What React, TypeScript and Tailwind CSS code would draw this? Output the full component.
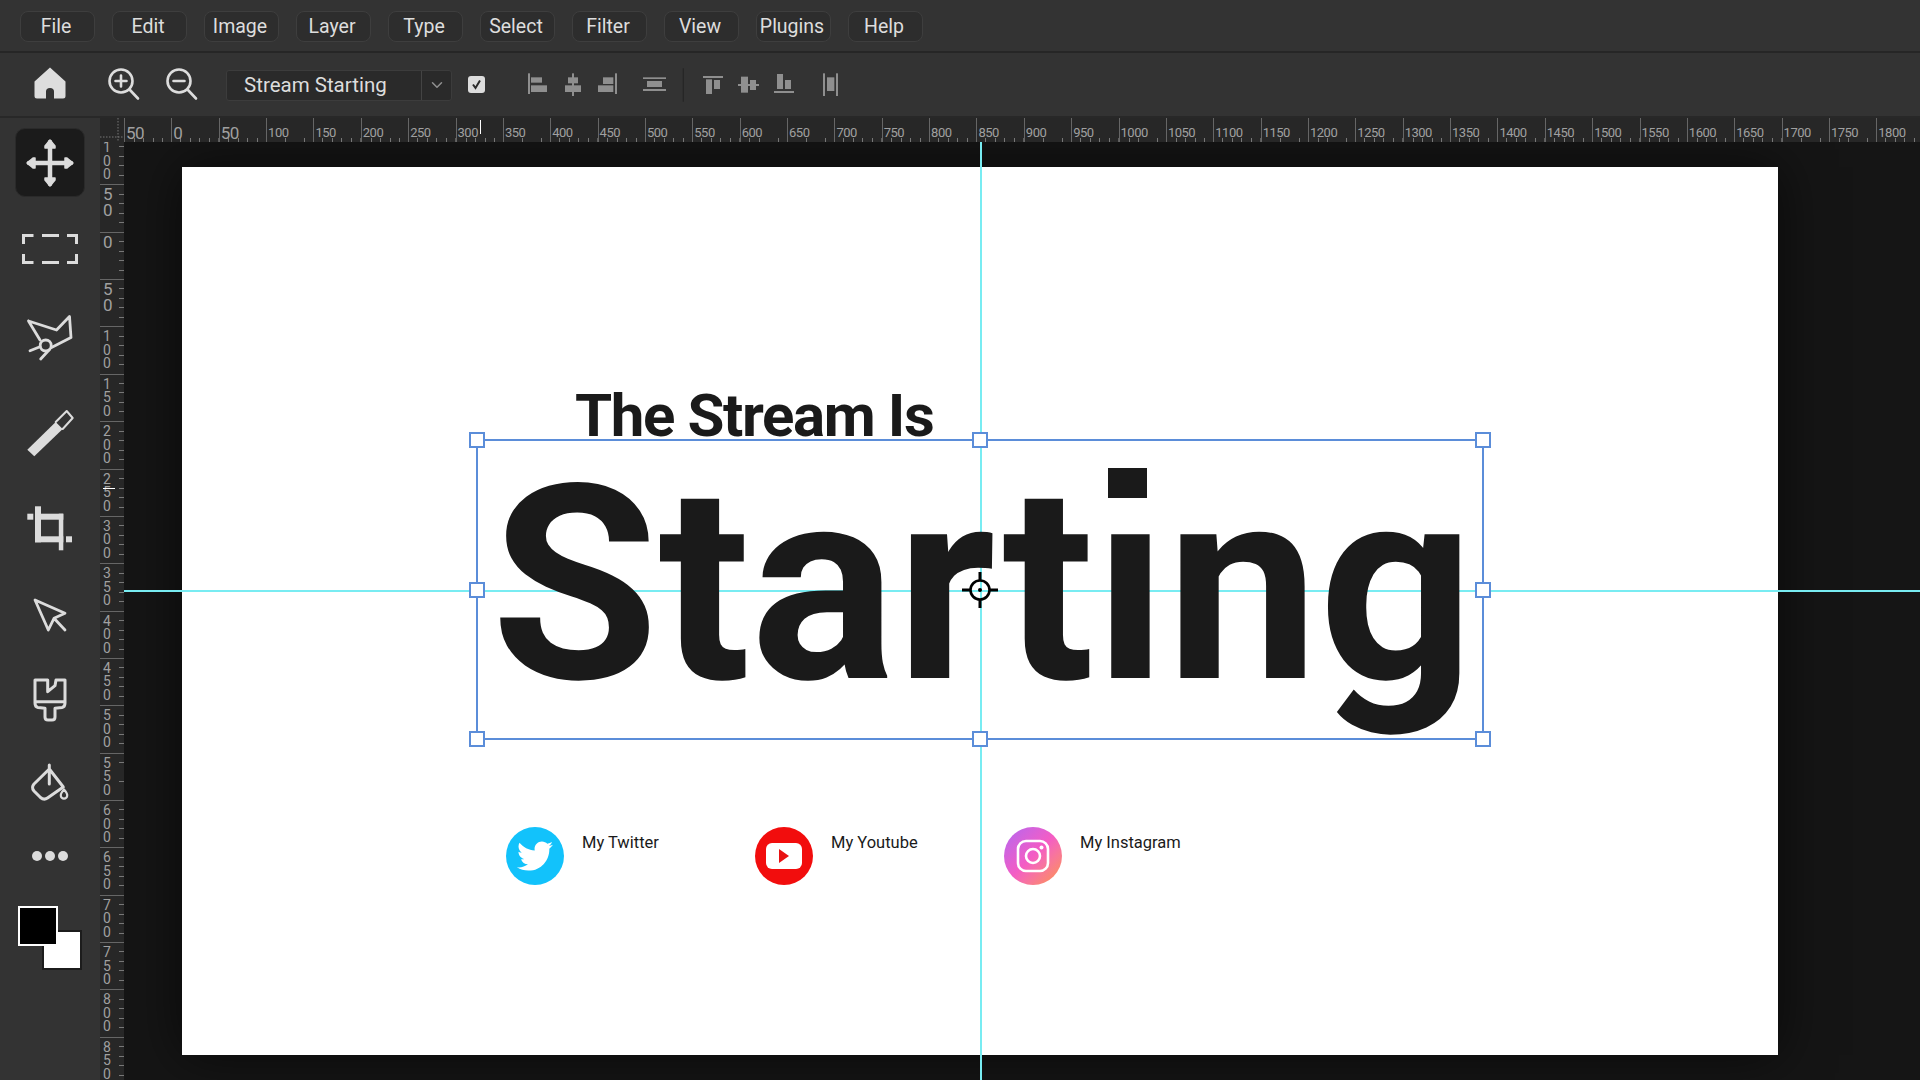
import { ChevronDown } from 'lucide-react';
import { FaTwitter } from 'react-icons/fa';

const menus = ['File', 'Edit', 'Image', 'Layer', 'Type', 'Select', 'Filter', 'View', 'Plugins', 'Help'];

const topLabels = ['50', '0', '50'].concat(
  Array.from({ length: 35 }, (_, i) => String((i + 2) * 50))
);
const sideLabels = ['100', '50', '0', '50'].concat(
  Array.from({ length: 17 }, (_, i) => String((i + 2) * 50))
);

// rects for the align row, measured in a 1080x150 box
const alignBars = [
  [84, 40, 6, 62], [93, 52, 33, 16], [93, 76, 48, 20],
  [216, 40, 6, 68], [204, 52, 30, 18], [195, 76, 48, 20],
  [345, 40, 6, 62], [309, 52, 31, 20], [294, 76, 46, 20],
  [429, 52, 69, 5], [441, 63, 45, 18], [429, 87, 69, 6],
  [609, 48, 60, 6], [618, 58, 18, 44], [642, 60, 18, 27],
  [714, 72, 63, 6], [723, 50, 21, 48], [750, 60, 18, 30],
  [822, 93, 60, 6], [831, 42, 18, 45], [855, 60, 18, 27],
  [969, 40, 6, 68], [1008, 40, 6, 68], [981, 52, 22, 41],
];

function ToolSvg({ children }: { children: React.ReactNode }) {
  return (
    <svg width="68" height="68" viewBox="0 0 68 68" fill="none" stroke="#dcdcdc" strokeWidth="2.8" strokeLinejoin="round" strokeLinecap="round">
      {children}
    </svg>
  );
}

function Tool({ className, children }: { className: string; children: React.ReactNode }) {
  return <div className={`w-[70px] h-[69px] flex items-center justify-center rounded-[10px] ${className}`}>{children}</div>;
}

function Handle({ className }: { className: string }) {
  return <div className={`absolute w-4 h-4 -translate-x-1/2 -translate-y-1/2 bg-white border-2 border-[#5b8dd9] ${className}`} />;
}

function Social({ label, className, children }: { label: string; className: string; children: React.ReactNode }) {
  return (
    <div className="flex w-[249px] items-start gap-[19px]">
      <div className={`w-[58px] h-[58px] rounded-full flex items-center justify-center ${className}`}>{children}</div>
      <span className="text-[16.5px] leading-[20px] mt-[6px] -ml-px text-[#1a1a1a]">{label}</span>
    </div>
  );
}

export default function App() {
  return (
    <div className="w-[1920px] h-[1080px] overflow-hidden flex flex-col bg-[#333333] font-['Roboto',sans-serif] text-[#dddddd]">
      {/* Menu bar */}
      <div className="h-[53px] shrink-0 flex items-start gap-[17px] pl-5 pt-[11px] border-b-2 border-[#262626]">
        {menus.map((m) => (
          <div key={m} className="w-[75px] h-[31px] flex items-center justify-center rounded-lg bg-[#2d2d2d] border border-[#3e3e3e] text-[19.5px] pt-px pr-[3px]">
            {m}
          </div>
        ))}
      </div>

      {/* Options bar */}
      <div className="h-[65px] shrink-0 flex items-center border-b-2 border-[#282828]">
        <svg className="ml-[34px] -mt-[3px]" width="32" height="32" viewBox="0 0 32 32" fill="#dddddd">
          <path d="M16 0.5 L31.5 14.5 V29 Q31.5 31.5 29 31.5 H20 V24.5 Q20 21 16 21 Q12 21 12 24.5 V31.5 H3 Q0.5 31.5 0.5 29 V14.5 Z" />
        </svg>
        <svg className="ml-[41px]" width="34" height="34" viewBox="0 0 34 34" fill="none" stroke="#dddddd" strokeWidth="2.6" strokeLinecap="round">
          <circle cx="14" cy="13" r="11.5" />
          <path d="M22.5 21.5 L31 30.5 M8.5 13 H19.5 M14 7.5 V18.5" />
        </svg>
        <svg className="ml-[24px]" width="34" height="34" viewBox="0 0 34 34" fill="none" stroke="#dddddd" strokeWidth="2.6" strokeLinecap="round">
          <circle cx="14" cy="13" r="11.5" />
          <path d="M22.5 21.5 L31 30.5 M8.5 13 H19.5" />
        </svg>
        <div className="ml-[27px] mt-[1px] w-[226px] h-[31px] flex rounded-[3px] bg-[#2a2a2a] border border-[#3c3c3c]">
          <div className="w-[195px] pl-[17px] text-[20.5px] leading-[29px] border-r border-[#444444]">Stream Starting</div>
          <div className="flex-1 flex items-center justify-center">
            <ChevronDown size={18} color="#909090" />
          </div>
        </div>
        <div className="ml-4 w-[17px] h-[17px] rounded-[3px] bg-[#dddddd] flex items-center justify-center">
          <svg width="11" height="11" viewBox="0 0 11 11" fill="none" stroke="#2a2a2a" strokeWidth="2">
            <path d="M2 5.5 L4.5 9 L9 1.5" />
          </svg>
        </div>
        <svg className="ml-[15px]" width="360" height="50" viewBox="0 0 1080 150" fill="#8f8f8f">
          {alignBars.map(([x, y, w, h], i) => (
            <rect key={i} x={x} y={y} width={w} height={h} />
          ))}
          <rect x="548" y="25" width="4" height="100" fill="#262626" />
        </svg>
      </div>

      <div className="flex-1 flex min-h-0">
        {/* Tools */}
        <div className="w-[100px] shrink-0 flex flex-col items-center pt-[10px]">
          <Tool className="bg-[#1b1b1b] border border-[#2a2a2a]">
            <ToolSvg>
              <path d="M34 13 V55 M13 34 H55" strokeWidth="4.5" />
              <path d="M34 11 L39 17 L39 19 L29 19 L29 17 Z M34 57 L39 51 L39 49 L29 49 L29 51 Z M11 34 L17 29 L19 29 L19 39 L17 39 Z M57 34 L51 29 L49 29 L49 39 L51 39 Z" fill="#dcdcdc" strokeWidth="1.5" />
            </ToolSvg>
          </Tool>
          <Tool className="mt-[17px]">
            <ToolSvg>
              <path strokeLinecap="butt" strokeLinejoin="miter" strokeWidth="3" d="M7.5 29 V20.5 H17.5 M26 20.5 H43 M51 20.5 H60.5 V29 M60.5 39 V47.5 H51 M43 47.5 H26 M17.5 47.5 H7.5 V39" />
            </ToolSvg>
          </Tool>
          <Tool className="mt-[19px]">
            <ToolSvg>
              <path d="M12.5 18 L40.5 27 L53.5 13.5 L55 34.5 L35.5 44.5 M12.5 18 L24 37" />
              <circle cx="29.7" cy="42.5" r="5.5" />
              <path d="M14 47.7 L24 43.7 M24.7 56 L33 47" />
            </ToolSvg>
          </Tool>
          <Tool className="mt-[27px]">
            <ToolSvg>
              <path d="M11.3 50.7 L39.7 23 L46.7 30 L18.3 57.3 Z" fill="#dcdcdc" stroke="none" />
              <path d="M39.7 23 L50.7 12 L56.7 19 L46.7 30" strokeWidth="2" />
            </ToolSvg>
          </Tool>
          <Tool className="mt-[26px]">
            <svg width="68" height="68" viewBox="0 0 68 68" fill="#dcdcdc">
              <rect x="19" y="12.3" width="6" height="36" />
              <rect x="19" y="42.3" width="28.3" height="6" />
              <rect x="25" y="19.7" width="22.3" height="6" />
              <rect x="42.8" y="19.7" width="4.5" height="36.6" />
              <rect x="11.3" y="19.7" width="6" height="6" />
              <rect x="50" y="42.3" width="6" height="6" />
            </svg>
          </Tool>
          <Tool className="mt-[18px]">
            <ToolSvg>
              <path d="M19 19 L49 32.3 L38 37.3 L32.3 49 Z M38 37.3 L49 49" />
            </ToolSvg>
          </Tool>
          <Tool className="mt-[16px]">
            <ToolSvg>
              <path strokeWidth="3" d="M19 14 H31.7 V25.7 L39 19.7 L40 14 H49 V37 Q49 41 46 41.5 L39 42.3 V51 Q39 54 36 54 H32 Q29 54 29 51 V42.3 L22 41.5 Q19 41 19 37 Z M19 35.7 H49" />
            </ToolSvg>
          </Tool>
          <Tool className="mt-[13px]">
            <ToolSvg>
              <path strokeWidth="3" d="M33.3 17 V36 M33.3 21 L18 36 Q15 39.5 18 43 L24.5 49.5 Q28 52.5 31.5 50 L47.3 39 Z" />
              <path strokeWidth="2.2" d="M48 41.5 Q51.5 45.5 51.2 47.5 A3.2 3.2 0 0 1 44.8 47.5 Q44.5 45.5 48 41.5 Z" />
            </ToolSvg>
          </Tool>
          <Tool className="mt-[5px]">
            <div className="flex gap-[3px]">
              <span className="w-[10px] h-[10px] rounded-full bg-[#dcdcdc]" />
              <span className="w-[10px] h-[10px] rounded-full bg-[#dcdcdc]" />
              <span className="w-[10px] h-[10px] rounded-full bg-[#dcdcdc]" />
            </div>
          </Tool>
          <div className="relative mt-[16px] w-16 h-16">
            <div className="absolute left-6 top-6 w-10 h-10 bg-white border-2 border-[#1c1c1c]" />
            <div className="absolute left-0 top-0 w-10 h-10 bg-black border-2 border-white" />
          </div>
        </div>

        {/* Workspace */}
        <div className="flex-1 flex flex-col min-w-0">
          <div className="h-6 shrink-0 flex bg-[#272727] text-[#a0a0a0] overflow-hidden relative">
            <div className="w-6 h-6 shrink-0">
              <svg width="24" height="24" viewBox="0 0 24 24" stroke="#777777" strokeDasharray="1.5 1.5">
                <path d="M18 0 V24 M0 19 H24" />
              </svg>
            </div>
            {topLabels.map((t, i) => (
              <div
                key={i}
                className="w-[47.37px] shrink-0 border-l border-[#666666] pl-px pt-[2px] bg-[image:repeating-linear-gradient(90deg,transparent_0,transparent_8.5px,#777777_8.5px,#777777_9.5px)] bg-[length:100%_4px] bg-bottom bg-no-repeat"
              >
                <span className={t.length < 3 ? 'text-[17px] leading-[26px] tracking-[-0.5px]' : 'text-[13px] leading-[22px] tracking-[-0.5px]'}>{t}</span>
              </div>
            ))}
            <div className="absolute left-[380px] top-[2px] w-px h-[14px] bg-white" />
          </div>

          <div className="flex-1 flex min-h-0">
            <div className="w-6 shrink-0 relative overflow-hidden bg-[#272727] text-[#a0a0a0]">
              <div className="-mt-[5px]">
                {sideLabels.map((t, i) => (
                  <div
                    key={i}
                    className="h-[47.37px] border-t border-[#666666] pt-[3px] pl-[3px] flex flex-col bg-[image:repeating-linear-gradient(0deg,transparent_0,transparent_8.5px,#777777_8.5px,#777777_9.5px)] bg-[length:5px_100%] bg-right bg-no-repeat"
                  >
                    {t.split('').map((d, j) => (
                      <span key={j} className={t.length < 3 ? 'text-[17px] leading-[16px] -translate-y-[2px]' : 'text-[14px] leading-[13.5px]'}>{d}</span>
                    ))}
                  </div>
                ))}
              </div>
              <div className="absolute left-[3px] top-[346px] w-3 h-px bg-white" />
            </div>

            {/* Canvas */}
            <div className="flex-1 relative min-w-0 overflow-hidden bg-[#151515]">
              <div className="ml-[58px] mt-[25px] w-[1596px] h-[888px] bg-white shadow-[0_0_50px_rgba(0,0,0,0.6)]" />
              {/* guides run behind the text */}
              <div className="absolute left-[856px] top-0 bottom-0 w-[1.5px] bg-[#78ecf2]" />
              <div className="absolute left-0 right-0 top-[448px] h-[1.5px] bg-[#78ecf2]" />

              <div className="absolute left-[58px] top-[25px] w-[1596px] h-[888px] text-[#1a1a1a]">
                <div className="absolute left-[393px] top-[219px] text-[60px] tracking-[-1.4px] leading-none font-bold whitespace-nowrap">The Stream Is</div>
                <div className="absolute left-[309px] top-[282px] text-[272px] leading-none font-bold whitespace-nowrap">Starting</div>
                {/* the i's dot is square in the reference */}
                <div className="absolute left-[922px] top-[296px] w-[50px] h-[60px] bg-white" />
                <div className="absolute left-[926px] top-[301px] w-[39px] h-[30px] bg-[#1a1a1a]" />

                <div className="absolute left-[294px] top-[272px] w-[1008px] h-[301px] border-2 border-[#5b8dd9]">
                  <div className="absolute -inset-px">
                    <Handle className="left-0 top-0" />
                    <Handle className="left-1/2 top-0" />
                    <Handle className="left-full top-0" />
                    <Handle className="left-0 top-1/2" />
                    <Handle className="left-full top-1/2" />
                    <Handle className="left-0 top-full" />
                    <Handle className="left-1/2 top-full" />
                    <Handle className="left-full top-full" />
                    <svg className="absolute left-1/2 top-1/2 -translate-x-1/2 -translate-y-1/2" width="40" height="40" viewBox="0 0 40 40" fill="none" stroke="#000000" strokeWidth="3">
                      <circle cx="20" cy="20" r="9.5" strokeWidth="2.6" />
                      <circle cx="20" cy="20" r="2" fill="#000000" stroke="none" />
                      <path d="M2 20 H10 M30 20 H38 M20 2 V10 M20 30 V38" />
                    </svg>
                  </div>
                </div>

                <div className="absolute left-[324px] top-[660px] flex">
                  <Social label="My Twitter" className="bg-[#12c2fb]">
                    <FaTwitter size={36} color="#ffffff" />
                  </Social>
                  <Social label="My Youtube" className="bg-[#f20d0d]">
                    <div className="w-9 h-[26px] rounded-[6px] bg-white flex items-center justify-center">
                      <svg width="12" height="14" viewBox="0 0 12 14" fill="#e81212">
                        <path d="M1 0 L11 7 L1 14 Z" />
                      </svg>
                    </div>
                  </Social>
                  <Social label="My Instagram" className="bg-linear-to-br from-[#b263f2] via-[#f45cc4] to-[#ff9330]">
                    <svg width="34" height="34" viewBox="0 0 34 34" fill="none" stroke="#ffffff" strokeWidth="2.6">
                      <rect x="2" y="2" width="30" height="30" rx="8" />
                      <circle cx="17" cy="17" r="7" />
                      <circle cx="25.5" cy="8.5" r="2" fill="#ffffff" stroke="none" />
                    </svg>
                  </Social>
                </div>
              </div>
            </div>
          </div>
        </div>
      </div>
    </div>
  );
}
